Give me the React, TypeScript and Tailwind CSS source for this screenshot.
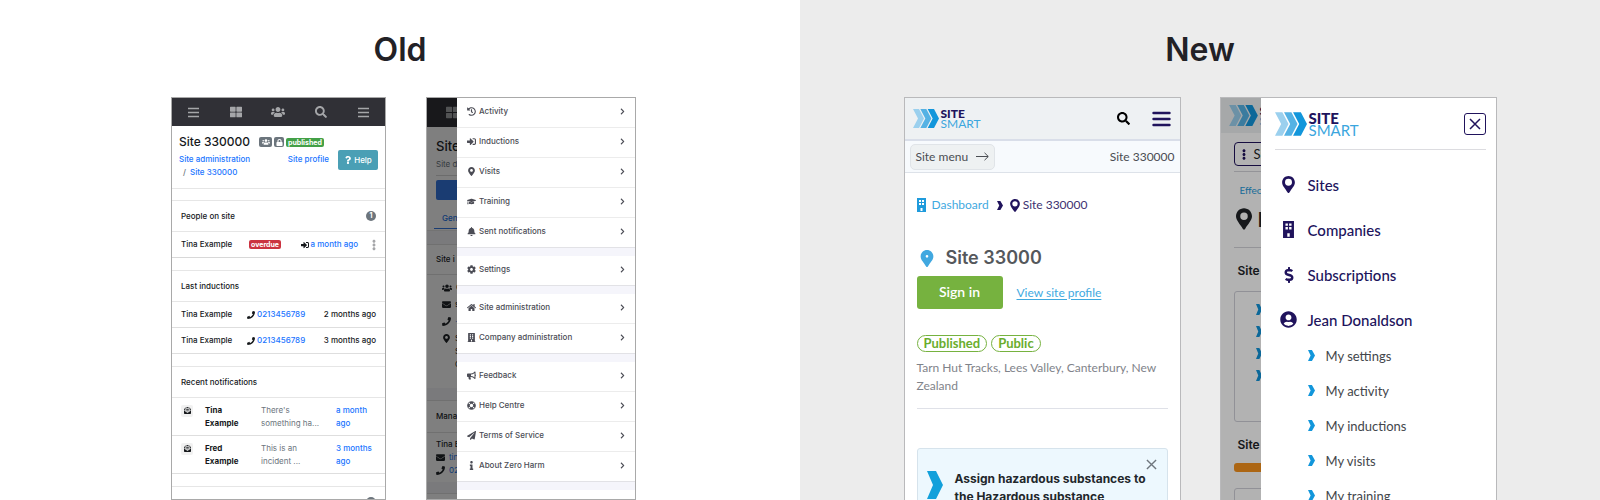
import type { ReactNode } from "react";
import type { IconType } from "react-icons";
import {
    FaBell,
    FaBuilding,
    FaBullhorn,
    FaChevronRight,
    FaCog,
    FaDollarSign,
    FaEllipsisV,
    FaEnvelope,
    FaEnvelopeOpenText,
    FaGraduationCap,
    FaHistory,
    FaHome,
    FaInfo,
    FaLifeRing,
    FaLock,
    FaMapMarkerAlt,
    FaPaperPlane,
    FaPhone,
    FaQuestion,
    FaSearch,
    FaSignInAlt,
    FaThLarge,
    FaUserCircle,
    FaUsers,
} from "react-icons/fa";

interface MenuEntry {
    label: string;
    icon: IconType;
}

const oldMenu: MenuEntry[][] = [
    [
        { label: "Activity", icon: FaHistory },
        { label: "Inductions", icon: FaSignInAlt },
        { label: "Visits", icon: FaMapMarkerAlt },
        { label: "Training", icon: FaGraduationCap },
        { label: "Sent notifications", icon: FaBell },
    ],
    [{ label: "Settings", icon: FaCog }],
    [
        { label: "Site administration", icon: FaHome },
        { label: "Company administration", icon: FaBuilding },
    ],
    [
        { label: "Feedback", icon: FaBullhorn },
        { label: "Help Centre", icon: FaLifeRing },
        { label: "Terms of Service", icon: FaPaperPlane },
        { label: "About Zero Harm", icon: FaInfo },
    ],
];

const inductions = [
    { name: "Tina Example", phone: "0213456789", when: "2 months ago" },
    { name: "Tina Example", phone: "0213456789", when: "3 months ago" },
];

const notifications = [
    { name: "Tina Example", text: "There's something ha...", when: "a month ago" },
    { name: "Fred Example", text: "This is an incident ...", when: "3 months ago" },
];

const accountLinks = ["My settings", "My activity", "My inductions", "My visits", "My training"];

/* Brand shapes */

function LogoArrows({ className }: { className: string }) {
    return (
        <svg viewBox="0 0 78 57" className={className} aria-hidden="true">
            <path d="M0 0h18l15 28.5L18 57H0l15-28.5z" fill="#9bd0ee" />
            <path d="M22 0h18l15 28.5L40 57H22l15-28.5z" fill="#55b2e4" />
            <path d="M44 0h19l15 28.5L63 57H44l15-28.5z" fill="#1296db" />
        </svg>
    );
}

function Chevron({ className }: { className: string }) {
    return (
        <svg viewBox="0 0 16 28" preserveAspectRatio="none" className={className} fill="currentColor" aria-hidden="true">
            <path d="M0 0h9l7 14-7 14H0l6-14z" />
        </svg>
    );
}

function Pin({ className, hole = 105 }: { className: string; hole?: number }) {
    return (
        <svg viewBox="0 0 384 512" className={className} fill="currentColor" aria-hidden="true">
            <path
                fillRule="evenodd"
                d={`M192 0C86 0 0 86 0 192c0 100 100 190 166 302 10 22 42 22 52 0C284 382 384 292 384 192 384 86 298 0 192 0zM${192 - hole} 190a${hole} ${hole} 0 1 0 ${hole * 2} 0a${hole} ${hole} 0 1 0-${hole * 2} 0z`}
            />
        </svg>
    );
}

function Building({ className }: { className: string }) {
    return (
        <svg viewBox="0 0 18 28" className={className} fill="currentColor" aria-hidden="true">
            <path
                fillRule="evenodd"
                d="M0 0h18v28H0zM4 4v4h4V4zM10 4v4h4V4zM4 10v4h4v-4zM10 10v4h4v-4zM7 26h4v-6H7z"
            />
        </svg>
    );
}

function Cross({ className }: { className: string }) {
    return (
        <svg viewBox="0 0 12 12" className={className} fill="none" stroke="currentColor" strokeWidth="1.5" aria-hidden="true">
            <path d="M1 1l10 10M11 1L1 11" />
        </svg>
    );
}

function ThinBars() {
    return (
        <svg viewBox="0 0 11 11" className="h-[11px] w-[11px]" stroke="currentColor" strokeWidth="1.3" aria-hidden="true">
            <path d="M0 1.500h11M0 5.500h11M0 9.500h11" />
        </svg>
    );
}

/* Old design */

function SectionTitle({ children }: { children: ReactNode }) {
    return (
        <h3 className="flex h-8 items-center justify-between border-y border-[#e6e6e6] px-[9px] font-medium">
            {children}
        </h3>
    );
}

function OldSitePage() {
    return (
        <article className="w-[215px] overflow-hidden border border-[#a9a9a9] bg-white text-[8px] leading-[13px] font-medium text-[#16191c]">
            <nav className="grid h-7 grid-cols-5 place-items-center bg-[#303036] text-[12px] text-[#a5a6a9]">
                <button aria-label="Menu"><ThinBars /></button>
                <button aria-label="Dashboard"><FaThLarge /></button>
                <button aria-label="People"><FaUsers className="text-[14px]" /></button>
                <button aria-label="Search"><FaSearch /></button>
                <button aria-label="More"><ThinBars /></button>
            </nav>

            <header className="h-[63px] border-b border-[#e6e6e6] pt-2 pr-[7px] pl-[7px]">
                <div className="flex items-center gap-[2px]">
                    <h2 className="mr-[7px] text-[12px] leading-4 font-medium">Site 330000</h2>
                    <span className="flex h-[10px] w-[13px] items-center justify-center rounded-[2px] bg-[#6c757d] text-white"><FaUsers /></span>
                    <span className="flex h-[10px] w-[10px] items-center justify-center rounded-[2px] bg-[#6c757d] text-[7px] text-white"><FaLock /></span>
                    <span className="h-[9px] rounded-[2px] bg-[#43a047] px-[2px] text-[7px] leading-[9px] font-bold text-white">published</span>
                </div>
                <div className="flex items-start text-[#1a75ff]">
                    <p className="mr-auto w-[84px] pt-[3px]">
                        <a href="#admin">Site administration</a>
                        <br />
                        <span className="px-1 text-[#6c757d]">/</span>
                        <a href="#site">Site 330000</a>
                    </p>
                    <a href="#profile" className="mr-[9px] pt-[3px]">Site profile</a>
                    <button className="flex h-5 w-10 items-center justify-center gap-[2px] rounded-[2px] bg-[#4a9fb5] text-white">
                        <FaQuestion />
                        Help
                    </button>
                </div>
            </header>

            <section className="mt-[11px]">
                <SectionTitle>
                    People on site
                    <span className="h-[10px] w-[10px] rounded-full bg-[#6c757d] text-center text-[7px] leading-[10px] font-bold text-white">1</span>
                </SectionTitle>
                <div className="flex h-[26px] items-center border-b border-[#d8d8d8] px-[9px]">
                    <span className="w-[68px]">Tina Example</span>
                    <span className="mr-auto h-[9px] rounded-[2px] bg-[#cb3340] px-[2px] text-[7px] leading-[9px] font-bold text-white">overdue</span>
                    <FaSignInAlt className="mr-[2px]" />
                    <a href="#visit" className="mr-[14px] text-[#1a75ff]">a month ago</a>
                    <button aria-label="Actions"><FaEllipsisV className="w-1 text-[14px] text-[#a5a6a9]" /></button>
                </div>
            </section>

            <section className="mt-3">
                <SectionTitle>Last inductions</SectionTitle>
                {inductions.map((row) => (
                    <div key={row.when} className="flex h-[26px] items-center border-b border-[#dedede] px-[9px]">
                        <span className="w-[66px]">{row.name}</span>
                        <FaPhone className="mr-[2px]" />
                        <a href="#call" className="text-[#1a75ff]">{row.phone}</a>
                        <span className="ml-auto">{row.when}</span>
                    </div>
                ))}
            </section>

            <section className="mt-3">
                <SectionTitle>Recent notifications</SectionTitle>
                {notifications.map((row) => (
                    <div key={row.name} className="flex h-[38px] items-center border-b border-[#dedede] px-[9px]">
                        <span className="mr-3 mb-3 flex h-3 w-3 items-center justify-center rounded-[2px] bg-[#f1f1f1] text-[7px]">
                            <FaEnvelopeOpenText />
                        </span>
                        <b className="mr-4 w-10 font-bold">{row.name}</b>
                        <span className="w-[75px] pr-2 font-normal text-[#6c757d]">{row.text}</span>
                        <a href="#notification" className="w-10 text-[#1a75ff]">{row.when}</a>
                    </div>
                ))}
            </section>

            <section className="mt-3">
                <SectionTitle>
                    <span className="ml-auto h-[10px] w-[10px] rounded-full bg-[#6c757d]" />
                </SectionTitle>
            </section>
        </article>
    );
}

function OldMenuPage() {
    return (
        <article className="relative w-[210px] overflow-hidden border border-[#a9a9a9] bg-white text-[8px] leading-[13px] whitespace-nowrap text-[#212529]">
            <div className="h-[29px] bg-[#303036] py-2 pl-[19px] text-[13px] text-[#a5a6a9]"><FaThLarge /></div>
            <div className="h-[104px] border-b border-[#e6e6e6] px-[9px] pt-[11px]">
                <h2 className="text-[13px] leading-4 font-medium">Site</h2>
                <p className="border-b border-[#d8d8d8] py-1 text-[#6c757d]">Site d</p>
                <div className="mt-1 h-5 rounded-[2px] bg-[#3478e5]" />
                <p className="mt-3 -ml-[2px] border-b border-[#3478e5] pb-[3px] pl-2 font-medium text-[#1a73e8]">Gen</p>
            </div>
            <div className="h-[13px] bg-[#f4f4f9]" />
            <h3 className="border-y border-[#e0e0e0] px-[9px] py-2 font-medium">Site i</h3>
            <div className="flex h-[113px] flex-col gap-1 pt-[6px] pl-[15px]">
                <p className="flex items-center gap-1"><FaUsers className="text-[10px]" />C</p>
                <p className="flex items-center gap-1"><FaEnvelope className="text-[9px]" />s</p>
                <p className="flex items-center gap-1"><FaPhone className="text-[9px]" /><span className="text-[#1a73e8]">+</span></p>
                <div className="flex gap-1"><FaMapMarkerAlt className="mt-[2px] text-[9px]" /><p>S<br />S<br />C</p></div>
            </div>
            <div className="h-3 bg-[#f4f4f9]" />
            <h3 className="border-y border-[#e0e0e0] px-[9px] py-[9px] font-medium">Mana</h3>
            <div className="h-[49px] px-[9px] pt-[5px]">
                <p className="font-medium">Tina E</p>
                <p className="flex items-center gap-1 text-[#1a73e8]"><FaEnvelope className="text-[9px] text-[#212529]" />tin</p>
                <p className="flex items-center gap-1 text-[#1a73e8]"><FaPhone className="text-[9px] text-[#212529]" />02</p>
            </div>
            <div className="h-3 border-b border-[#e0e0e0] bg-[#f4f4f9]" />

            {/* Drawer */}
            <div className="absolute inset-0 flex bg-black/50 pl-[30px]">
                <nav className="flex flex-1 flex-col gap-2 bg-[#f5f5fb] font-medium text-[#4b4c55]">
                    {oldMenu.map((group, index) => (
                        <ul key={index} className="border-b border-[#e2e2e6] bg-white">
                            {group.map(({ label, icon: Icon }) => (
                                <li key={label} className="border-b border-[#ececec] last:border-b-0">
                                    <a href="#menu" className="flex h-[29px] items-center gap-[3px] pr-[9px] pb-[2px] pl-[9px]">
                                        <span className="flex w-[10px] justify-center text-[9px]"><Icon /></span>
                                        {label}
                                        <FaChevronRight className="ml-auto text-[7px]" />
                                    </a>
                                </li>
                            ))}
                        </ul>
                    ))}
                    <div className="flex-1 bg-white" />
                </nav>
            </div>
        </article>
    );
}

/* New design */

function NewSitePage() {
    return (
        <article className="w-[277px] border border-[#b9b9bb] bg-white font-['Lato','Liberation_Sans',sans-serif] text-[12px] leading-[18px] text-[#4a4d52]">
            <header className="flex h-[43px] items-center border-b-2 border-[#d9dee9] bg-[#eef1f3] pr-[9px] pl-2">
                <LogoArrows className="mr-[2px] h-[19px] w-[26px]" />
                <div className="mr-auto text-[12px] leading-[10px] text-[#3ba6de]">
                    <strong className="block font-black text-[#20135c]">SITE</strong>
                    SMART
                </div>
                <button aria-label="Search" className="mr-[22px] text-[13px] text-black"><FaSearch /></button>
                <button aria-label="Menu" className="text-[#20135c]">
                    <svg viewBox="0 0 19 16" className="h-4 w-[19px]" stroke="currentColor" strokeWidth="2.4" strokeLinecap="round" aria-hidden="true">
                        <path d="M1.5 2h16M1.5 8h16M1.5 14h16" />
                    </svg>
                </button>
            </header>
            <div className="flex h-8 items-center justify-between border-b border-[#dde2e9] bg-[#f7fafd] px-[5px]">
                <button className="flex h-[26px] items-center gap-2 rounded-[5px] border border-[#e0e4e8] bg-[#eef1f2] px-[5px]">
                    Site menu
                    <svg viewBox="0 0 13 9" className="h-[9px] w-[13px]" fill="none" stroke="currentColor" aria-hidden="true">
                        <path d="M0 4.5h12M8.500 .8L12.300 4.500 8.500 8.200" />
                    </svg>
                </button>
                <span>Site 330000</span>
            </div>

            <div className="px-3">
                <nav className="mt-[23px] flex items-center">
                    <Building className="mr-[6px] h-[14px] w-[9px] text-[#1f9bdc]" />
                    <a href="#dashboard" className="text-[#3fa9df]">Dashboard</a>
                    <Chevron className="mr-[7px] ml-2 h-[9px] w-[6px] text-[#20135c]" />
                    <Pin className="mr-[3px] h-[13px] w-[10px] text-[#20135c]" />
                    <span className="text-[#3c3170]">Site 330000</span>
                </nav>
                <h2 className="mt-8 flex items-center gap-3 pl-[3px] font-['Inter',sans-serif] text-[18px] leading-6 font-semibold text-[#55585c]">
                    <Pin hole={40} className="h-[17px] w-[14px] text-[#41a8e0]" />
                    Site 33000
                </h2>
                <div className="mt-[6px] flex items-center gap-[14px]">
                    <button className="h-[33px] w-[86px] rounded-[3px] bg-[#76b23f] pb-[2px] text-[14px] font-semibold text-white">Sign in</button>
                    <a href="#profile" className="text-[#3fa9df] underline underline-offset-2">View site profile</a>
                </div>
                <div className="mt-[26px] flex gap-1 text-[13px] font-bold text-[#6aad2d]">
                    <span className="h-[17px] rounded-full border border-[#76b23f] px-[6px] leading-[15px]">Published</span>
                    <span className="h-[17px] rounded-full border border-[#76b23f] px-[6px] leading-[15px]">Public</span>
                </div>
                <p className="mt-[7px] border-b border-[#dfe1e8] pb-[13px] text-[#7f838a]">
                    Tarn Hut Tracks, Lees Valley, Canterbury, New Zealand
                </p>
                <div className="mt-[39px] flex rounded-[3px] border border-[#d6e3ec] bg-[#edf8fe] pt-[10px] pr-[10px] pb-5 pl-[9px]">
                    <Chevron className="mt-3 mr-3 h-7 w-4 shrink-0 text-[#12a0db]" />
                    <div className="flex flex-1 flex-col">
                        <button aria-label="Dismiss" className="self-end text-[#6f767d]"><Cross className="h-[11px] w-[11px]" /></button>
                        <p className="font-['Inter',sans-serif] text-[12px] font-bold whitespace-nowrap text-[#22272b]">
                            Assign hazardous substances to
                            <br />
                            the Hazardous substance
                        </p>
                    </div>
                </div>
            </div>
        </article>
    );
}

function NewMenuPage() {
    return (
        <article className="relative w-[277px] overflow-hidden border border-[#b9b9bb] bg-white font-['Lato','Liberation_Sans',sans-serif] text-[14px] leading-[18px] text-[#212529]">
            <div className="flex h-[35px] items-center gap-[2px] bg-[#eef1f3] pl-2 text-[12px] leading-[10px] text-[#3ba6de]">
                <LogoArrows className="h-[21px] w-[29px]" />
                <p><b className="block font-black text-[#20135c]">S</b>S</p>
            </div>
            <div className="pl-[13px]">
                <p className="mt-[9px] flex h-6 items-center gap-2 rounded-[4px] border border-[#20135c] pl-[7px] text-[13px]">
                    <FaEllipsisV className="w-1 text-[#20135c]" />
                    Si
                </p>
                <p className="mt-[5px] border-t border-[#d5d5da] pt-[9px] pl-[6px] text-[10px] text-[#1f9bdc]">Effec</p>
                <p className="mt-[9px] flex h-10 items-start gap-[6px] border-b border-[#d5d5da] pl-[2px] text-[20px] leading-[22px] font-bold">
                    <Pin hole={90} className="h-[22px] w-4" />
                    I
                </p>
                <h3 className="mt-[14px] pl-1 font-['Inter',sans-serif] text-[12px] font-semibold">Site</h3>
                <div className="mt-[11px] flex h-[131px] flex-col gap-[11px] rounded-[3px] border border-[#d0d0d8] pt-3 pl-[21px] text-[#1296db]">
                    <Chevron className="h-[11px] w-[6px]" />
                    <Chevron className="h-[11px] w-[6px]" />
                    <Chevron className="h-[11px] w-[6px]" />
                    <Chevron className="h-[11px] w-[6px]" />
                </div>
                <h3 className="mt-[14px] pl-1 font-['Inter',sans-serif] text-[12px] font-semibold">Site</h3>
                <div className="mt-[9px] h-[9px] rounded-[3px] bg-[#f7931e]" />
                <div className="mt-4 h-10 rounded-[3px] border border-[#d0d0d8]" />
            </div>

            {/* Drawer */}
            <div className="absolute inset-0 flex bg-black/30 pl-[40px]">
                <nav className="flex-1 overflow-hidden bg-white pr-[10px] pl-[14px] text-[#20135c]">
                    <div className="flex h-[52px] items-center border-b border-[#dcdce0]">
                        <LogoArrows className="mr-[2px] h-6 w-8" />
                        <div className="mr-auto text-[15px] leading-3 text-[#3ba6de]">
                            <strong className="block font-black text-[#20135c]">SITE</strong>
                            SMART
                        </div>
                        <button aria-label="Close" className="flex h-[22px] w-[22px] items-center justify-center rounded-[3px] border border-[#20135c]">
                            <Cross className="h-3 w-3" />
                        </button>
                    </div>
                    <ul className="mt-3 text-[15px] font-medium">
                        <li><a href="#sites" className="flex h-[45px] items-center"><span className="mr-[5px] flex w-7 justify-center"><Pin className="h-[17px] w-[13px]" /></span>Sites</a></li>
                        <li><a href="#companies" className="flex h-[45px] items-center"><span className="mr-[5px] flex w-7 justify-center"><Building className="h-[17px] w-[11px]" /></span>Companies</a></li>
                        <li><a href="#subscriptions" className="flex h-[45px] items-center"><span className="mr-[5px] flex w-7 justify-center"><FaDollarSign className="text-[16px]" /></span>Subscriptions</a></li>
                        <li>
                            <a href="#account" className="flex h-[45px] items-center"><span className="mr-[5px] flex w-7 justify-center"><FaUserCircle className="text-[17px]" /></span>Jean Donaldson</a>
                            <ul className="-mt-1 pl-[33px] text-[13px] font-normal text-[#43464b]">
                                {accountLinks.map((label) => (
                                    <li key={label}>
                                        <a href="#account" className="flex h-[35px] items-center gap-[11px]">
                                            <Chevron className="h-[11px] w-[7px] text-[#1296db]" />
                                            {label}
                                        </a>
                                    </li>
                                ))}
                            </ul>
                        </li>
                    </ul>
                </nav>
            </div>
        </article>
    );
}

export default function App() {
    return (
        <main className="grid h-screen grid-cols-2 overflow-hidden bg-white font-['Inter',sans-serif]">
            <section className="flex min-h-0 flex-col items-center">
                <h1 className="pt-[30px] text-[32px] leading-10 font-semibold text-[#222126]">Old</h1>
                <div className="mt-[27px] ml-[7px] flex min-h-0 flex-1 gap-10">
                    <OldSitePage />
                    <OldMenuPage />
                </div>
            </section>
            <section className="flex min-h-0 flex-col items-center overflow-hidden bg-[#ececec]">
                <h1 className="pt-[30px] text-[32px] leading-10 font-semibold text-[#222126]">New</h1>
                <div className="mt-[27px] flex shrink-0 gap-[39px]">
                    <NewSitePage />
                    <NewMenuPage />
                </div>
            </section>
        </main>
    );
}
